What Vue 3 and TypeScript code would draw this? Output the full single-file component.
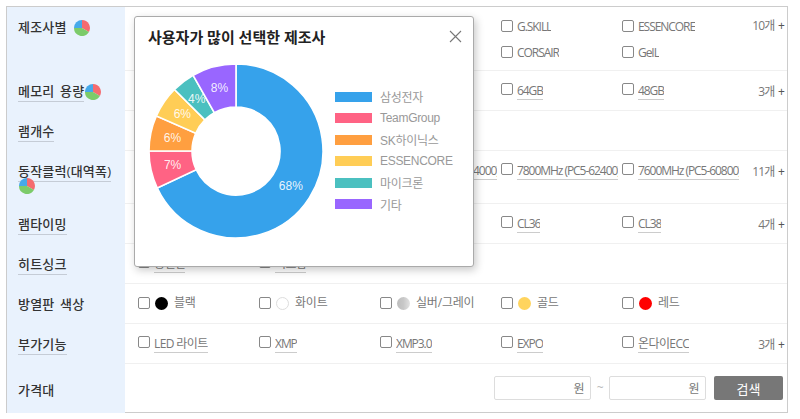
<script setup lang="ts">
import { computed } from 'vue'

interface Item {
  text: string
  color?: string
  gradient?: boolean
  ring?: boolean
}
interface Row {
  label: string
  linked: boolean
  pie?: boolean
  kind: string
  count?: string
  items: Item[]
}

const t = (...names: string[]): Item[] => names.map((text) => ({ text }))

const rows: Row[] = [
  { label: '제조사별', linked: false, pie: true, kind: 'maker', count: '10개', items: t('', '', '', 'G.SKILL', 'ESSENCORE', '', '', '', 'CORSAIR', 'GeIL') },
  { label: '메모리 용량', linked: true, pie: true, kind: 'mem', count: '3개', items: t('', '', '', '64GB', '48GB') },
  { label: '램개수', linked: true, kind: 'mem', items: [] },
  { label: '동작클럭(대역폭)', linked: true, pie: true, kind: 'clock', count: '11개', items: t('', '', '8000MHz (PC5-64000)', '7800MHz (PC5-62400)', '7600MHz (PC5-60800)') },
  { label: '램타이밍', linked: true, kind: 'timing', count: '4개', items: t('', '', '', 'CL36', 'CL38') },
  { label: '히트싱크', linked: true, kind: 'heat', items: t('방열판', '미포함') },
  {
    label: '방열판 색상',
    linked: false,
    kind: 'colors',
    items: [
      { text: '블랙', color: '#000' },
      { text: '화이트', color: '#fff', ring: true },
      { text: '실버/그레이', gradient: true },
      { text: '골드', color: '#ffd45e' },
      { text: '레드', color: '#f00' }
    ]
  },
  { label: '부가기능', linked: true, kind: 'extra', count: '3개', items: t('LED 라이트', 'XMP', 'XMP3.0', 'EXPO', '온다이ECC') }
]

const isLatin = (s: string): boolean => !/[가-힣]/.test(s)

const share = [
  { name: '삼성전자', pct: '68%', end: 0.68, color: '#36a2eb' },
  { name: 'TeamGroup', pct: '7%', end: 0.75, color: '#ff6384' },
  { name: 'SK하이닉스', pct: '6%', end: 0.816, color: '#ff9f40' },
  { name: 'ESSENCORE', pct: '6%', end: 0.875, color: '#ffcd56' },
  { name: '마이크론', pct: '4%', end: 0.918, color: '#4bc0c0' },
  { name: '기타', pct: '8%', end: 1, color: '#9966ff' }
]

const C = 88
const R = 87
const r = 44

const at = (frac: number, radius: number): [number, number] => {
  const a = frac * Math.PI * 2
  return [C + Math.sin(a) * radius, C - Math.cos(a) * radius]
}

const slices = computed(() => {
  let start = 0
  return share.map((s) => {
    const [x1, y1] = at(start, R)
    const [x2, y2] = at(s.end - 0.00001, R)
    const [x3, y3] = at(s.end - 0.00001, r)
    const [x4, y4] = at(start, r)
    const large = s.end - start > 0.5 ? 1 : 0
    const [lx, ly] = at((start + s.end) / 2, 65)
    start = s.end
    return {
      ...s,
      lx,
      ly,
      d: `M${x1} ${y1}A${R} ${R} 0 ${large} 1 ${x2} ${y2}L${x3} ${y3}A${r} ${r} 0 ${large} 0 ${x4} ${y4}Z`
    }
  })
})
</script>

<template>
  <div class="page">
    <section class="table">
      <div v-for="row in rows" :key="row.label" class="row" :class="'row--' + row.kind">
        <div class="head">
          <span class="name" :class="{ 'name--link': row.linked }">{{ row.label }}</span>
          <svg v-if="row.pie" class="mini" viewBox="0 0 16 16" width="16" height="16">
            <path d="M8 8L0 8A8 8 0 0 1 8 0Z" fill="#45a9ea" />
            <path d="M8 8L8 0A8 8 0 0 1 14.9 12Z" fill="#f56b6f" />
            <path d="M8 8L14.9 12A8 8 0 0 1 0 8Z" fill="#7ccb6a" />
          </svg>
        </div>
        <div class="cells">
          <template v-for="(item, i) in row.items" :key="i">
            <label v-if="item.text" class="cell">
              <input type="checkbox" class="check" />
              <span v-if="item.color" class="dot" :class="{ 'dot--ring': item.ring }" :style="{ background: item.color }"></span>
              <span v-else-if="item.gradient" class="dot dot--silver"></span>
              <span
                class="text"
                :class="{
                  'text--link': row.linked,
                  'text--swatch': item.color || item.gradient,
                  'text--latin': isLatin(item.text)
                }"
              >{{ item.text }}</span>
            </label>
            <span v-else class="cell"></span>
          </template>
        </div>
        <div class="count">
          <template v-if="row.count">{{ row.count }} <b>+</b></template>
        </div>
      </div>

      <div class="row row--price">
        <div class="head"><span class="name">가격대</span></div>
        <div class="price">
          <label class="field"><input type="text" /><span>원</span></label>
          <span class="tilde">~</span>
          <label class="field"><input type="text" /><span>원</span></label>
          <button type="button" class="search">검색</button>
        </div>
      </div>

      <aside class="popup">
        <header class="popup-head">
          <h2>사용자가 많이 선택한 제조사</h2>
          <svg class="close" viewBox="0 0 13 13" width="13" height="13">
            <path d="M1 1L12 12M12 1L1 12" stroke="#777" stroke-width="1.1" fill="none" />
          </svg>
        </header>
        <div class="popup-body">
          <svg class="donut" viewBox="0 0 176 176" width="176" height="176">
            <path v-for="s in slices" :key="s.name" :d="s.d" :fill="s.color" stroke="#fff" stroke-width="1.6" />
            <text
              v-for="s in slices"
              :key="s.name + 't'"
              :x="s.lx"
              :y="s.ly"
              class="pct"
              text-anchor="middle"
              dominant-baseline="central"
            >{{ s.pct }}</text>
          </svg>
          <ul class="legend">
            <li v-for="s in share" :key="s.name">
              <i :style="{ background: s.color }"></i>{{ s.name }}
            </li>
          </ul>
        </div>
      </aside>
    </section>
  </div>
</template>

<style>
html,
body {
  margin: 0;
  background: #fff;
}
</style>

<style scoped>
.page {
  width: 800px;
  height: 419px;
  padding: 6px 0 0 6px;
  box-sizing: border-box;
  overflow: hidden;
  font-family: "Open Sans", "Noto Sans CJK KR", sans-serif;
  font-size: 12px;
  letter-spacing: -0.6px;
  color: #777;
}
.table {
  position: relative;
  width: 782px;
  box-sizing: border-box;
  border: 1px solid #ccc;
}
.row {
  display: flex;
  box-sizing: border-box;
  height: 40px;
  border-bottom: 1px solid #f0f0f0;
}
.row--maker {
  height: 64px;
}
.row--clock {
  height: 53px;
}
.row--price {
  height: 48px;
  border-bottom: 0;
}
.head {
  flex: none;
  width: 118px;
  box-sizing: border-box;
  margin-bottom: -1px;
  padding: 11px 4px 0 11px;
  background: #e9f2fd;
  font-size: 13px;
  line-height: 19px;
  font-weight: 500;
  letter-spacing: 0.2px;
  word-spacing: 2px;
  color: #333;
}
.row--price .head {
  padding-top: 17px;
}
.name--link {
  border-bottom: 1px solid #c5ccd6;
  padding-bottom: 1px;
}
.mini {
  vertical-align: -4px;
  margin-left: 1px;
}
.row--maker .mini {
  margin-left: 7px;
}
.row--clock .mini {
  display: block;
  margin: -3px 0 0 1px;
}
.cells {
  display: grid;
  grid-template-columns: repeat(5, 121px);
  grid-auto-rows: 26px;
  align-content: start;
  flex: none;
  width: 605px;
  padding-left: 13px;
  padding-top: 6px;
}
.cell {
  display: flex;
  align-items: center;
  height: 26px;
  min-width: 0;
}
.check {
  appearance: none;
  flex: none;
  width: 12px;
  height: 12px;
  margin: -3px 4px 0 0;
  box-sizing: border-box;
  border: 1px solid #888;
  border-radius: 2px;
  background: #fff;
}
.row--colors .check,
.row--maker .check {
  margin-top: 0;
}
.row--maker .text {
  margin-top: 1px;
}
.dot {
  flex: none;
  width: 13px;
  height: 13px;
  border-radius: 50%;
  margin-left: 1px;
  box-sizing: border-box;
}
.dot--ring {
  border: 1px solid #ddd;
}
.dot--silver {
  background: linear-gradient(90deg, #bdbdbd 0%, #c8c8c8 50%, #e2e2e2 100%);
}
.text {
  display: block;
  max-width: 101px;
  overflow: hidden;
  white-space: nowrap;
  line-height: 16px;
}
.text--latin {
  letter-spacing: -1.05px;
}
.text--link {
  border-bottom: 1px solid #ccc;
  margin-top: 2px;
}
.text--swatch {
  margin-left: 6px;
  letter-spacing: -0.2px;
}
.count {
  flex: 1;
  text-align: right;
  padding: 13px 3px 0 0;
  line-height: 16px;
  white-space: nowrap;
  letter-spacing: -0.8px;
}
.count b {
  color: #555;
  font-weight: 500;
  margin-left: 1px;
}
.row--maker .count {
  padding-top: 11px;
}
.price {
  flex: 1;
  display: flex;
  justify-content: flex-end;
  align-items: flex-start;
  padding: 12px 4px 0 0;
}
.field {
  display: flex;
  align-items: center;
  width: 97px;
  height: 24px;
  box-sizing: border-box;
  border: 1px solid #ddd;
  border-radius: 2px;
  padding: 0 6px 0 4px;
}
.field input {
  flex: 1;
  min-width: 0;
  border: 0;
  padding: 0;
  outline: 0;
  font: inherit;
}
.tilde {
  width: 18px;
  text-align: center;
  color: #bbb;
  line-height: 24px;
}
.search {
  width: 69px;
  height: 24px;
  margin-left: 8px;
  border: 0;
  border-radius: 2px;
  background: #777;
  color: #fff;
  font: inherit;
  font-size: 13px;
  letter-spacing: 0;
}
.popup {
  position: absolute;
  left: 127px;
  top: 9px;
  width: 340px;
  height: 251px;
  box-sizing: border-box;
  border: 1px solid #aaa;
  border-radius: 3px;
  background: #fff;
  box-shadow: 2px 3px 8px rgba(0, 0, 0, 0.22);
}
.popup-head {
  display: flex;
  justify-content: space-between;
  align-items: center;
  height: 38px;
  padding: 0 11px 0 13px;
}
.popup-head h2 {
  margin: 0;
  font-size: 15px;
  font-weight: 700;
  letter-spacing: 0;
  color: #222;
}
.popup-body {
  display: flex;
  padding: 8px 0 0 13px;
}
.donut {
  flex: none;
}
.pct {
  font-family: "Liberation Sans", sans-serif;
  font-size: 12px;
  letter-spacing: 0;
  fill: #fff;
  fill-opacity: 0.9;
}
.legend {
  list-style: none;
  margin: 23px 0 0 11px;
  padding: 0;
  font-family: "Liberation Sans", "Noto Sans CJK KR", sans-serif;
  font-size: 12px;
  letter-spacing: -0.3px;
  color: #999;
}
.legend li {
  display: flex;
  align-items: center;
  height: 21.5px;
  white-space: nowrap;
}
.legend i {
  width: 37px;
  height: 10px;
  margin-right: 8px;
}
</style>
